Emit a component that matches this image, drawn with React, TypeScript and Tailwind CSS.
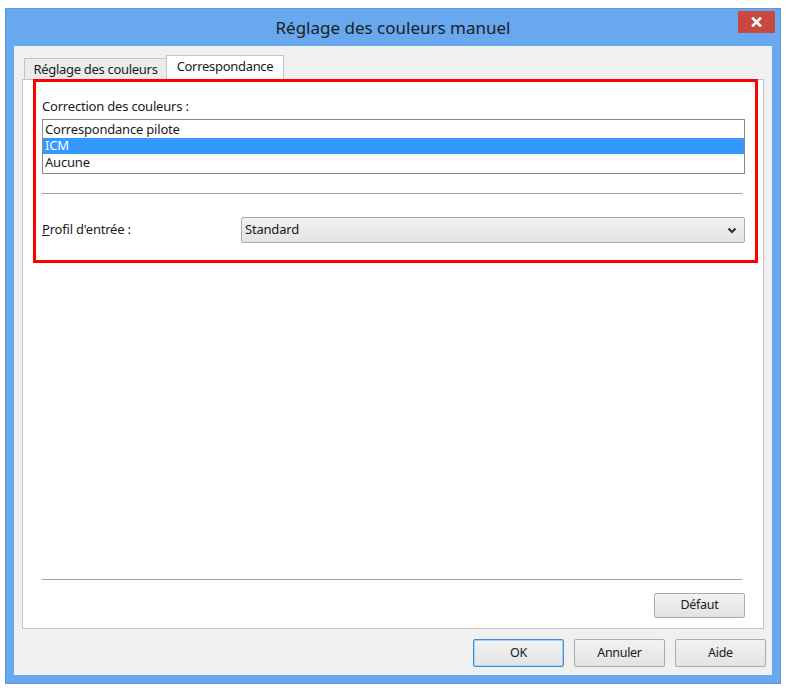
import React from "react";

const font = { fontFamily: '"Noto Sans", "Open Sans", Arial, sans-serif' };

function Btn({ label, def, w }: { label: string; def?: boolean; w: string }) {
  return (
    <div
      className={`${w} h-full flex items-center justify-center rounded-[2px] border text-[12.5px] text-[#1a1a1a] tracking-[-0.3px] bg-gradient-to-b from-[#f2f2f2] to-[#e3e3e3] ${
        def ? "border-[#3c8ed8] shadow-[inset_0_0_0_1px_#a8d0f2]" : "border-[#acacac]"
      }`}
    >
      {label}
    </div>
  );
}

export default function App() {
  return (
    <div className="w-[787px] h-[690px] bg-white pl-[5px] pt-[8px]" style={font}>
      <div className="w-[776px] h-[676px] bg-[#68a8ee] border border-[#5a98dc] flex flex-col">
        {/* title bar */}
        <div className="h-[37px] flex items-center relative shrink-0">
          <div className="flex-1 text-center text-[17px] text-[#1e1e1e] pt-[1px]">Réglage des couleurs manuel</div>
          <div className="absolute right-[5px] top-[2px] w-[37px] h-[22px] bg-[#c9483f] flex items-center justify-center">
            <svg width="11" height="10" viewBox="0 0 11 10">
              <path d="M2 1.5 L9 8.5 M9 1.5 L2 8.5" stroke="#fff" strokeWidth="2.6" strokeLinecap="square" />
            </svg>
          </div>
        </div>
        {/* client */}
        <div className="mx-[8px] mb-[8px] flex-1 bg-[#f0f0f0] flex flex-col px-[8px]">
          {/* tabs */}
          <div className="h-[33px] flex items-end pl-[2px] shrink-0">
            <div className="h-[21px] w-[143px] border border-b-0 border-[#c4c4c4] bg-[#ececec] flex items-center justify-center text-[13px] text-[#1a1a1a] tracking-[-0.3px] -mr-[1px] pt-[1px]">
              Réglage des couleurs
            </div>
            <div className="h-[25px] w-[118px] border border-b-0 border-[#c4c4c4] bg-white flex items-center justify-center text-[13px] text-[#1a1a1a] tracking-[-0.3px] pb-[3px] relative top-[1px]">
              Correspondance
            </div>
          </div>
          {/* panel */}
          <div className="h-[550px] bg-white border border-[#c4c4c4] relative flex flex-col pl-[19px] pr-[18px] shrink-0">
            <div className="absolute left-[10px] top-[-1px] w-[725px] h-[184px] border-[3px] border-[#ff0000] pointer-events-none" />
            <div className="h-[39px] flex items-end pb-[3px] text-[13px] text-[#1a1a1a] tracking-[-0.2px]">
              Correction des couleurs :
            </div>
            <div className="h-[55px] border border-[#8a8a8a] bg-white text-[13px] text-[#1a1a1a] tracking-[-0.2px] py-[1px] flex flex-col">
              <div className="h-[17px] flex items-center px-[2px]">Correspondance pilote</div>
              <div className="h-[16px] flex items-center px-[2px] bg-[#3399ff] text-white">ICM</div>
              <div className="h-[17px] flex items-center px-[2px]">Aucune</div>
            </div>
            <div className="mt-[19px] h-[2px] border-t border-[#a0a0a0] border-b border-b-white mr-[3px]" />
            <div className="mt-[22px] h-[26px] flex items-center">
              <div className="w-[199px] text-[13px] text-[#1a1a1a] tracking-[-0.2px]">
                <span className="underline">P</span>rofil d'entrée :
              </div>
              <div className="flex-1 h-full border border-[#acacac] rounded-[2px] bg-gradient-to-b from-[#f2f2f2] to-[#e3e3e3] flex items-center justify-between pl-[3px] pr-[7px] text-[13px] text-[#1a1a1a] tracking-[-0.2px]">
                <span>Standard</span>
                <svg width="10" height="7" viewBox="0 0 10 7">
                  <path d="M1.5 1.5 L5 5 L8.5 1.5" stroke="#333" strokeWidth="2.2" fill="none" />
                </svg>
              </div>
            </div>
            <div className="flex-1" />
            <div className="h-[2px] border-t border-[#a0a0a0] border-b border-b-white mr-[3px]" />
            <div className="mt-[12px] h-[25px] flex justify-end">
              <Btn label="Défaut" w="w-[91px]" />
            </div>
            <div className="h-[10px]" />
          </div>
          {/* buttons */}
          <div className="mt-[10px] h-[28px] flex justify-end gap-[10px] -mr-[2px]">
            <Btn label="OK" def w="w-[91px]" />
            <Btn label="Annuler" w="w-[91px]" />
            <Btn label="Aide" w="w-[91px]" />
          </div>
        </div>
      </div>
    </div>
  );
}
